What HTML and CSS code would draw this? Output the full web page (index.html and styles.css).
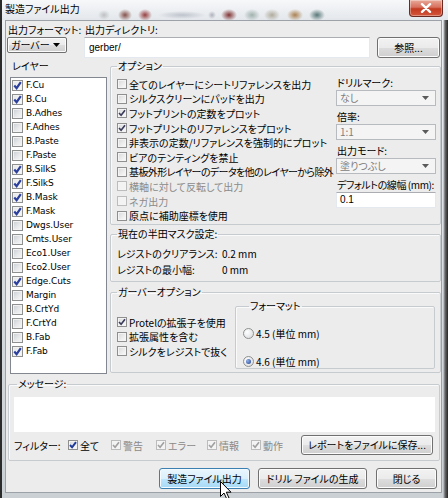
FILE: index.html
```html
<!DOCTYPE html>
<html lang="ja">
<head>
<meta charset="utf-8">
<title>製造ファイル出力</title>
<link rel="stylesheet" href="styles.css">
</head>
<body>
<div class="win">
  <div class="titlebar">
    <span class="title">製造ファイル出力</span>
    <div class="close"><svg width="12" height="10" viewBox="0 0 12 10"><path d="M2 1.2 L10 8.8 M10 1.2 L2 8.8" stroke="#fff" stroke-width="2.4" stroke-linecap="round"/></svg></div>
  </div>
  <div class="body">
    <div class="top">
      <div class="tcol tcol1">
        <div class="lbl">出力フォーマット:</div>
        <div class="combo"><span>ガーバー</span><svg class="carr" width="7" height="4" viewBox="0 0 7 4"><path d="M0 0 H7 L3.5 4 Z" fill="#000"/></svg></div>
      </div>
      <div class="tcol tcol2">
        <div class="lbl">出力ディレクトリ:</div>
        <div class="input">gerber/</div>
      </div>
      <div class="tcol tcol3">
        <div class="btn">参照...</div>
      </div>
    </div>

    <div class="middle">
      <div class="layers">
        <div class="lbl lbl-layers">レイヤー</div>
        <div class="list">
          <div class="lrow"><span class="lcb on"><svg viewBox="0 0 9 9"><path d="M1.3 4.6 L3.6 7.2 L7.8 1.2" /></svg></span>F.Cu</div>
          <div class="lrow"><span class="lcb on"><svg viewBox="0 0 9 9"><path d="M1.3 4.6 L3.6 7.2 L7.8 1.2" /></svg></span>B.Cu</div>
          <div class="lrow"><span class="lcb"></span>B.Adhes</div>
          <div class="lrow"><span class="lcb"></span>F.Adhes</div>
          <div class="lrow"><span class="lcb"></span>B.Paste</div>
          <div class="lrow"><span class="lcb"></span>F.Paste</div>
          <div class="lrow"><span class="lcb on"><svg viewBox="0 0 9 9"><path d="M1.3 4.6 L3.6 7.2 L7.8 1.2" /></svg></span>B.SilkS</div>
          <div class="lrow"><span class="lcb on"><svg viewBox="0 0 9 9"><path d="M1.3 4.6 L3.6 7.2 L7.8 1.2" /></svg></span>F.SilkS</div>
          <div class="lrow"><span class="lcb on"><svg viewBox="0 0 9 9"><path d="M1.3 4.6 L3.6 7.2 L7.8 1.2" /></svg></span>B.Mask</div>
          <div class="lrow"><span class="lcb on"><svg viewBox="0 0 9 9"><path d="M1.3 4.6 L3.6 7.2 L7.8 1.2" /></svg></span>F.Mask</div>
          <div class="lrow"><span class="lcb"></span>Dwgs.User</div>
          <div class="lrow"><span class="lcb"></span>Cmts.User</div>
          <div class="lrow"><span class="lcb"></span>Eco1.User</div>
          <div class="lrow"><span class="lcb"></span>Eco2.User</div>
          <div class="lrow"><span class="lcb on"><svg viewBox="0 0 9 9"><path d="M1.3 4.6 L3.6 7.2 L7.8 1.2" /></svg></span>Edge.Cuts</div>
          <div class="lrow"><span class="lcb"></span>Margin</div>
          <div class="lrow"><span class="lcb"></span>B.CrtYd</div>
          <div class="lrow"><span class="lcb"></span>F.CrtYd</div>
          <div class="lrow"><span class="lcb"></span>B.Fab</div>
          <div class="lrow"><span class="lcb on"><svg viewBox="0 0 9 9"><path d="M1.3 4.6 L3.6 7.2 L7.8 1.2" /></svg></span>F.Fab</div>
        </div>
      </div>

      <div class="right">
        <fieldset class="box opts">
          <legend>オプション</legend>
          <div class="opts-inner">
            <div class="optcol">
              <div class="orow"><span class="cb"></span>全てのレイヤーにシートリファレンスを出力</div>
              <div class="orow"><span class="cb"></span>シルクスクリーンにパッドを出力</div>
              <div class="orow"><span class="cb on"><svg viewBox="0 0 8 8"><path d="M1 4 L3.1 6.3 L7 1.2"/></svg></span>フットプリントの定数をプロット</div>
              <div class="orow"><span class="cb on"><svg viewBox="0 0 8 8"><path d="M1 4 L3.1 6.3 L7 1.2"/></svg></span>フットプリントのリファレンスをプロット</div>
              <div class="orow"><span class="cb"></span>非表示の定数/リファレンスを強制的にプロット</div>
              <div class="orow"><span class="cb"></span>ビアのテンティングを禁止</div>
              <div class="orow tight"><span class="cb"></span>基板外形レイヤーのデータを他のレイヤーから除外</div>
              <div class="orow dis"><span class="cb"></span>横軸に対して反転して出力</div>
              <div class="orow dis"><span class="cb"></span>ネガ出力</div>
              <div class="orow"><span class="cb"></span>原点に補助座標を使用</div>
            </div>
            <div class="drillcol">
              <div class="lbl">ドリルマーク:</div>
              <div class="drop"><span>なし</span><svg width="7" height="4" viewBox="0 0 7 4"><path d="M0 0 H7 L3.5 4 Z" fill="#5a5a5a"/></svg></div>
              <div class="lbl">倍率:</div>
              <div class="drop"><span>1:1</span><svg width="7" height="4" viewBox="0 0 7 4"><path d="M0 0 H7 L3.5 4 Z" fill="#5a5a5a"/></svg></div>
              <div class="lbl">出力モード:</div>
              <div class="drop"><span>塗りつぶし</span><svg width="7" height="4" viewBox="0 0 7 4"><path d="M0 0 H7 L3.5 4 Z" fill="#5a5a5a"/></svg></div>
              <div class="lbl lbl-tight">デフォルトの線幅 (mm):</div>
              <div class="input small">0.1</div>
            </div>
          </div>
        </fieldset>

        <fieldset class="box mask">
          <legend>現在の半田マスク設定:</legend>
          <div class="mrow"><span class="mkey">レジストのクリアランス:</span><span>0.2 mm</span></div>
          <div class="mrow"><span class="mkey">レジストの最小幅:</span><span>0 mm</span></div>
        </fieldset>

        <fieldset class="box gerber">
          <legend>ガーバーオプション</legend>
          <div class="gerber-inner">
            <div class="gcol">
              <div class="grow"><span class="cb on"><svg viewBox="0 0 8 8"><path d="M1 4 L3.1 6.3 L7 1.2"/></svg></span>Protelの拡張子を使用</div>
              <div class="grow"><span class="cb"></span>拡張属性を含む</div>
              <div class="grow"><span class="cb"></span>シルクをレジストで抜く</div>
            </div>
            <fieldset class="box fmt">
              <legend>フォーマット</legend>
              <div class="rrow"><span class="radio"></span>4.5 (単位 mm)</div>
              <div class="rrow"><span class="radio on"><span class="dot"></span></span>4.6 (単位 mm)</div>
            </fieldset>
          </div>
        </fieldset>
      </div>
    </div>

    <fieldset class="box msg">
      <legend>メッセージ:</legend>
      <div class="msgarea"></div>
      <div class="filter">
        <span class="f-lbl">フィルター:</span>
        <span class="fitem f1"><span class="cb blue on"><svg viewBox="0 0 8 8"><path d="M1 4 L3.1 6.3 L7 1.2"/></svg></span>全て</span>
        <span class="fitem f2 dis"><span class="cb on"><svg viewBox="0 0 8 8"><path d="M1 4 L3.1 6.3 L7 1.2"/></svg></span>警告</span>
        <span class="fitem f3 dis"><span class="cb on"><svg viewBox="0 0 8 8"><path d="M1 4 L3.1 6.3 L7 1.2"/></svg></span>エラー</span>
        <span class="fitem f4 dis"><span class="cb on"><svg viewBox="0 0 8 8"><path d="M1 4 L3.1 6.3 L7 1.2"/></svg></span>情報</span>
        <span class="fitem f5 dis"><span class="cb on"><svg viewBox="0 0 8 8"><path d="M1 4 L3.1 6.3 L7 1.2"/></svg></span>動作</span>
        <span class="btn report">レポートをファイルに保存...</span>
      </div>
    </fieldset>

    <div class="buttons">
      <div class="btn primary b1">製造ファイル出力
        <svg class="cursor" width="12" height="19" viewBox="0 0 12 19"><path d="M0.5 0.5 L0.5 15.5 L4 12 L6.8 18 L9 17 L6.3 11.2 L11 11.2 Z" fill="#fff" stroke="#000" stroke-width="1"/></svg>
      </div>
      <div class="btn b2">ドリル ファイルの生成</div>
      <div class="btn b3">閉じる</div>
    </div>
  </div>
</div>
</body>
</html>
```

FILE: styles.css
```css
* { box-sizing: border-box; }
html, body { margin: 0; padding: 0; }
body {
  width: 448px;
  height: 498px;
  overflow: hidden;
  font-family: "Noto Sans CJK JP", "Noto Sans", sans-serif;
  font-size: 10px;
  font-feature-settings: "palt";
  color: #000;
}
.win {
  width: 448px;
  height: 498px;
  display: flex;
  flex-direction: column;
  border-left: 2px solid #2b2b2b;
  background:
    linear-gradient(90deg, transparent calc(100% - 5px), #6a6a6a calc(100% - 3px), #262626 100%),
    linear-gradient(#eef1f4, #d6dbe0 60%, #cbd0d5);
}
.titlebar {
  height: 20px;
  flex: none;
  display: flex;
  align-items: flex-start;
  padding-left: 3px;
  background:
    radial-gradient(ellipse 6px 5px at 102px 15px, rgba(110,110,110,.35), transparent),
    radial-gradient(ellipse 7px 6px at 123px 15px, rgba(100,30,20,.75), transparent),
    radial-gradient(ellipse 7px 6px at 143px 15px, rgba(130,20,20,.8), transparent),
    radial-gradient(ellipse 24px 4px at 180px 15px, rgba(110,120,140,.35), transparent),
    radial-gradient(ellipse 4px 4px at 210px 15px, rgba(90,90,110,.4), transparent),
    radial-gradient(ellipse 8px 6px at 227px 15px, rgba(110,20,20,.85), transparent),
    radial-gradient(ellipse 8px 6px at 250px 15px, rgba(100,130,120,.55), transparent),
    radial-gradient(ellipse 8px 6px at 270px 15px, rgba(130,120,90,.55), transparent),
    radial-gradient(ellipse 8px 6px at 293px 15px, rgba(150,95,30,.75), transparent),
    radial-gradient(ellipse 8px 6px at 315px 15px, rgba(40,80,80,.75), transparent),
    linear-gradient(#f7f8fa, #e3e7eb);
}
.title {
  line-height: 18px;
  font-size: 10px;
}
.close {
  margin-left: auto;
  margin-right: 5px;
  width: 34px;
  height: 17px;
  border: 1px solid #6b2a22;
  border-top: none;
  border-radius: 0 0 4px 4px;
  background: linear-gradient(#e9a999 0%, #d7705e 45%, #c2391f 55%, #d4573c 100%);
  box-shadow: inset 0 0 0 1px rgba(255,255,255,.35);
  display: flex;
  align-items: center;
  justify-content: center;
}
.body {
  flex: 1;
  margin: 0 6px 5px 3px;
  background: #ececec;
  border: 1px solid #9ca2a8;
  display: flex;
  flex-direction: column;
  padding-top: 2px;
}
.lbl {
  line-height: 14px;
  height: 14px;
  white-space: nowrap;
}

/* top row */
.top {
  display: flex;
  margin-left: 1px;
  height: 35px;
}
.tcol1 { width: 60px; }
.tcol1 .lbl { padding-left: 1px; }
.tcol2 { width: 286px; margin-left: 17px; }
.tcol2 .lbl { padding-left: 1px; }
.tcol3 { width: 63px; margin-left: 7px; padding-top: 14px; }
.combo {
  height: 16px;
  border: 1px solid #707070;
  border-radius: 2px;
  background: linear-gradient(#f2f2f2 0%, #ebebeb 50%, #dddddd 51%, #cfcfcf 100%);
  box-shadow: inset 0 0 0 1px #fbfbfb;
  display: flex;
  align-items: center;
  justify-content: space-between;
  padding: 0 6px 0 3px;
  line-height: 14px;
}
.input {
  height: 21px;
  background: #fff;
  border: 1px solid #e3e9ef;
  border-top-color: #abadb3;
  line-height: 19px;
  padding-left: 4px;
  font-family: "Liberation Sans", sans-serif;
}
.btn {
  height: 21px;
  border: 1px solid #707070;
  border-radius: 3px;
  background: linear-gradient(#f2f2f2 0%, #ebebeb 50%, #dddddd 51%, #cfcfcf 100%);
  box-shadow: inset 0 0 0 1px #fcfcfc;
  display: flex;
  align-items: center;
  justify-content: center;
  line-height: 14px;
  white-space: nowrap;
}

/* middle */
.middle {
  display: flex;
  margin-top: 1px;
  height: 316px;
}
.layers { width: 104px; flex: none; }
.lbl-layers { padding-left: 6px; }
.list {
  margin: 4px 0 0 4px;
  width: 97px;
  height: 297px;
  background: #fff;
  border: 1px solid #828790;
}
.lrow {
  height: 14px;
  line-height: 14px;
  display: flex;
  align-items: center;
  padding-left: 1px;
  font-family: "DejaVu Sans", sans-serif;
  font-size: 9px;
  letter-spacing: -0.1px;
}
.lcb {
  width: 11px;
  height: 11px;
  border: 1px solid #8e8f8f;
  background: linear-gradient(135deg, #c9cdd2 0%, #e6e8ea 55%, #f7f7f7 100%);
  box-shadow: inset 0 0 0 1px #f2f2f2;
  margin-right: 3px;
  flex: none;
  display: flex;
  align-items: center;
  justify-content: center;
}
.lcb.on { background: linear-gradient(135deg, #e4e6e8, #fafafa); }
.lcb svg { width: 9px; height: 9px; }
.lcb path { fill: none; stroke: #2a3f9e; stroke-width: 2.2; }

.right { width: 331px; flex: none; }
.box {
  margin: 0;
  padding: 0;
  min-inline-size: 0;
  border: 1px solid #c6cbd0;
  border-radius: 2px;
  box-shadow: inset 1px 1px 0 #fafafa;
}
.box legend {
  padding: 0 1px;
  margin-left: 6px;
  line-height: 14px;
  height: 14px;
}
.opts { height: 166px; }
.opts-inner {
  display: flex;
  padding: 3px 0 0 6px;
}
.optcol { width: 219px; flex: none; padding-top: 1px; }
.orow, .grow {
  height: 14.6px;
  display: flex;
  align-items: center;
  white-space: nowrap;
}
.orow.tight { letter-spacing: -0.6px; }
.grow { height: 14.5px; }
.cb {
  width: 10px;
  height: 10px;
  border: 1px solid #8f8f8f;
  background: linear-gradient(135deg, #d6d8db 0%, #ececec 55%, #fbfbfb 100%);
  box-shadow: inset 0 0 0 1px #f4f4f4;
  margin-right: 2px;
  flex: none;
  display: inline-flex;
  align-items: center;
  justify-content: center;
}
.cb svg { width: 8px; height: 8px; }
.cb path { fill: none; stroke: #3a3a5a; stroke-width: 1.6; }
.cb.blue path { stroke: #1e3a9a; stroke-width: 2; }
.dis { color: #8a8a8a; }
.dis .cb { border-color: #bcbcbc; background: #f3f3f3; }
.dis .cb path { stroke: #a0a0a0; }

.drillcol {
  width: 100px;
  flex: none;
}
.drillcol .lbl { padding-left: 1px; }
.drillcol .lbl-tight { letter-spacing: -0.4px; overflow: visible; }
.drop {
  height: 16px;
  border: 1px solid #b7bbbf;
  background: #f4f4f4;
  color: #7d7d7d;
  display: flex;
  align-items: center;
  justify-content: space-between;
  padding: 0 6px 0 3px;
  margin-bottom: 4px;
  line-height: 14px;
}
.input.small {
  height: 16px;
  line-height: 14px;
  padding-left: 3px;
}

.mask { margin-top: 2px; height: 55px; }
.mask .mrow:first-of-type { margin-top: 5px; }
.mrow {
  height: 16px;
  line-height: 16px;
  display: flex;
  padding-left: 6px;
  white-space: nowrap;
}
.mkey { width: 105px; }

.gerber { margin-top: 3px; height: 88px; }
.gerber-inner { display: flex; }
.gcol {
  width: 124px;
  flex: none;
  padding: 16px 0 0 6px;
}
.fmt {
  width: 200px;
  height: 70px;
  padding: 13px 0 0 7px;
}
.rrow {
  height: 14px;
  display: flex;
  align-items: center;
  white-space: nowrap;
}
.rrow + .rrow { margin-top: 14px; }
.radio {
  width: 11px;
  height: 11px;
  border-radius: 50%;
  border: 1px solid #8e8f8f;
  background: radial-gradient(circle at 35% 35%, #ffffff, #d5d7da);
  margin-right: 2px;
  display: inline-flex;
  align-items: center;
  justify-content: center;
  flex: none;
}
.dot {
  width: 5px;
  height: 5px;
  border-radius: 50%;
  background: radial-gradient(circle at 35% 35%, #8fb0e6, #1f3f8e);
}

/* messages */
.msg {
  margin: 2px 1px 0 2px;
  height: 84px;
  padding: 0 0 0 5px;
}
.msg legend { margin-left: 3px; }
.msgarea {
  margin-top: 6px;
  width: 421px;
  height: 35px;
  background: #fff;
}
.filter {
  margin-top: 3px;
  height: 20px;
  display: flex;
  align-items: center;
  white-space: nowrap;
}
.f-lbl { width: 54px; }
.fitem { display: flex; align-items: center; }
.f1 { width: 43px; }
.f2 { width: 45px; }
.f3 { width: 51px; }
.f4 { width: 44px; }
.f5 { width: 50px; }
.btn.report { width: 132px; height: 20px; }

/* bottom buttons */
.buttons {
  margin-top: 7px;
  display: flex;
  justify-content: flex-end;
  margin-right: 4px;
}
.buttons .btn { height: 21px; }
.b1 { width: 91px; position: relative; }
.b2 { width: 109px; margin-left: 8px; }
.b3 { width: 61px; margin-left: 9px; }
.btn.primary {
  border-color: #3c7fb1;
  background: linear-gradient(#eaf6fd 0%, #d9f0fc 50%, #bee6fd 51%, #a7d9f5 100%);
  box-shadow: inset 0 0 0 1px #f4fbff;
}
.cursor {
  position: absolute;
  left: 60px;
  top: 12px;
}
```
